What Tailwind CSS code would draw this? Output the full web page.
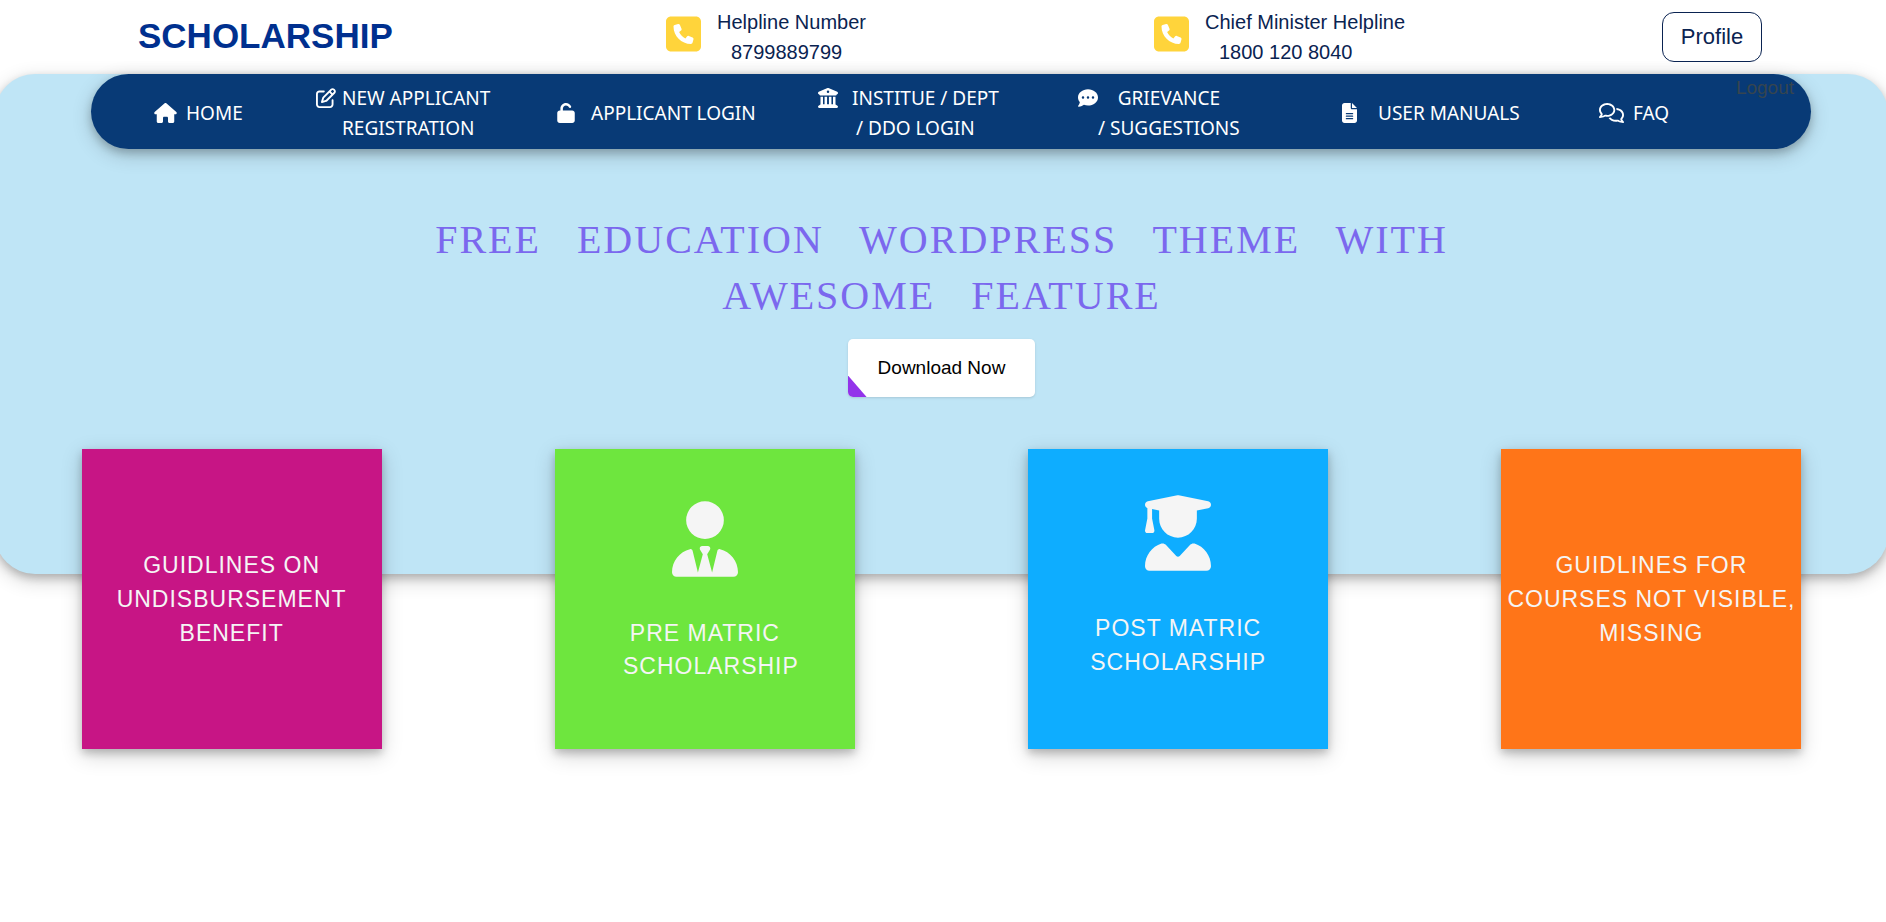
<!DOCTYPE html>
<html lang="en">
<head>
<meta charset="utf-8">
<meta name="viewport" content="width=device-width, initial-scale=1">
<title>Scholarship</title>
<script src="https://cdn.jsdelivr.net/npm/@tailwindcss/browser@4"></script>
</head>
<body class="min-h-screen overflow-x-hidden bg-white font-['Liberation_Sans',Arial,sans-serif]">

<header class="grid h-[74px] grid-cols-[528fr_488fr_508fr_100fr] pr-[124px] pl-[138px] text-[#0a2351]">
  <a href="#" class="pt-4 text-[35px] leading-10 font-bold text-[#00308f]">SCHOLARSHIP</a>
  <div class="flex gap-4 pt-[7px] text-xl leading-[30px]">
    <svg class="mt-[7px] h-10 w-[35px] shrink-0 fill-[#ffd43b]" viewBox="0 0 448 512" aria-hidden="true"><path d="M64 32C28.7 32 0 60.7 0 96V416c0 35.3 28.7 64 64 64H384c35.3 0 64-28.7 64-64V96c0-35.3-28.7-64-64-64H64zm90.7 96.7c9.7-2.6 19.9 2.3 23.7 11.6l20 48c3.4 8.2 1 17.6-5.8 23.2L168 231.7c16.6 35.2 45.1 63.7 80.3 80.3l20.2-24.7c5.6-6.8 15-9.2 23.2-5.8l48 20c9.3 3.9 14.2 14 11.6 23.7l-12 44C336.9 378 329 384 320 384C196.3 384 96 283.7 96 160c0-9 6-16.9 14.7-19.3l44-12z"/></svg>
    <p>Helpline Number<br><span class="pl-[14px]">8799889799</span></p>
  </div>
  <div class="flex gap-4 pt-[7px] text-xl leading-[30px]">
    <svg class="mt-[7px] h-10 w-[35px] shrink-0 fill-[#ffd43b]" viewBox="0 0 448 512" aria-hidden="true"><path d="M64 32C28.7 32 0 60.7 0 96V416c0 35.3 28.7 64 64 64H384c35.3 0 64-28.7 64-64V96c0-35.3-28.7-64-64-64H64zm90.7 96.7c9.7-2.6 19.9 2.3 23.7 11.6l20 48c3.4 8.2 1 17.6-5.8 23.2L168 231.7c16.6 35.2 45.1 63.7 80.3 80.3l20.2-24.7c5.6-6.8 15-9.2 23.2-5.8l48 20c9.3 3.9 14.2 14 11.6 23.7l-12 44C336.9 378 329 384 320 384C196.3 384 96 283.7 96 160c0-9 6-16.9 14.7-19.3l44-12z"/></svg>
    <p>Chief Minister Helpline<br><span class="pl-[14px]">1800 120 8040</span></p>
  </div>
  <div class="relative z-10 pt-3">
    <button type="button" class="h-[50px] w-full rounded-xl border border-[#0a2351] text-[22px] leading-7">Profile</button>
    <a href="#" class="absolute top-[76px] -right-8 text-[19px] leading-6 text-[#36454f]">Logout</a>
  </div>
</header>

<main class="-mr-[2px] -ml-[5px]">
  <section class="h-[500px] rounded-[40px] bg-[#bfe5f6] shadow-[0_4px_8px_0_rgba(0,0,0,0.2),0_6px_20px_0_rgba(0,0,0,0.19)]">
    <nav class="mr-[77px] ml-[96px] grid h-[75px] grid-cols-[162fr_241fr_261fr_260fr_264fr_257fr_149fr] items-center rounded-full bg-[#083a76] px-[63px] pt-[2px] font-['Noto_Sans','Open_Sans',sans-serif] text-[19px] leading-[30px] whitespace-nowrap text-white shadow-[0_4px_8px_0_rgba(0,0,0,0.2),0_6px_20px_0_rgba(0,0,0,0.19)]">
      <a href="#" class="flex gap-[9px]">
        <svg class="mt-[5px] h-5 w-[23px] shrink-0 fill-current" viewBox="0 0 576 512" aria-hidden="true"><path d="M575.8 255.5c0 18-15 32.1-32 32.1h-32l.7 160.2c0 2.7-.2 5.4-.5 8.1V472c0 22.1-17.9 40-40 40H456c-1.1 0-2.2 0-3.3-.1c-1.4 .1-2.8 .1-4.2 .1H416 392c-22.1 0-40-17.9-40-40V448 384c0-17.7-14.3-32-32-32H256c-17.7 0-32 14.3-32 32v64 24c0 22.1-17.9 40-40 40H160 128.1c-1.5 0-3-.1-4.5-.2c-1.2 .1-2.4 .2-3.6 .2H104c-22.1 0-40-17.9-40-40V360c0-.9 0-1.9 .1-2.8V287.6H32c-18 0-32-14-32-32.1c0-9 3-17 10-24L266.4 8c7-7 15-8 22-8s15 2 21 7L564.8 231.5c8 7 12 15 11 24z"/></svg>
        <span>HOME</span>
      </a>
      <a href="#" class="flex gap-[6px]">
        <svg class="mt-[5px] h-5 w-5 shrink-0 fill-current" viewBox="0 0 512 512" aria-hidden="true"><path d="M441 58.9L453.1 71c9.4 9.4 9.4 24.6 0 33.9L424 134.1 377.9 88 407 58.9c9.4-9.4 24.6-9.4 33.9 0zM209.8 256.2L344 121.9 390.1 168 255.8 302.2c-2.9 2.9-6.5 5-10.4 6.1l-58.5 16.7 16.7-58.5c1.1-3.9 3.2-7.5 6.1-10.4zM373.1 25L175.8 222.2c-8.7 8.7-15 19.4-18.3 31.1l-28.6 100c-2.4 8.4-.1 17.4 6.1 23.6s15.2 8.5 23.6 6.1l100-28.6c11.8-3.4 22.5-9.7 31.1-18.3L487 138.9c28.1-28.1 28.1-73.7 0-101.8L474.9 25C446.8-3.1 401.2-3.1 373.1 25zM88 64C39.4 64 0 103.4 0 152V424c0 48.6 39.4 88 88 88H360c48.6 0 88-39.4 88-88V312c0-13.3-10.7-24-24-24s-24 10.7-24 24V424c0 22.1-17.9 40-40 40H88c-22.1 0-40-17.9-40-40V152c0-22.1 17.9-40 40-40H200c13.3 0 24-10.7 24-24s-10.7-24-24-24H88z"/></svg>
        <span>NEW APPLICANT<br>REGISTRATION</span>
      </a>
      <a href="#" class="flex gap-4">
        <svg class="mt-[5px] h-5 w-[18px] shrink-0 fill-current" viewBox="0 0 448 512" aria-hidden="true"><path d="M144 144c0-44.2 35.8-80 80-80c31.9 0 59.4 18.6 72.3 45.7c7.6 16 26.7 22.8 42.6 15.2s22.8-26.7 15.2-42.6C331 33.7 281.5 0 224 0C144.5 0 80 64.5 80 144v48H64c-35.3 0-64 28.7-64 64V448c0 35.3 28.7 64 64 64H384c35.3 0 64-28.7 64-64V256c0-35.3-28.7-64-64-64H144V144z"/></svg>
        <span>APPLICANT LOGIN</span>
      </a>
      <a href="#" class="flex gap-[14px]">
        <svg class="mt-[5px] h-5 w-5 shrink-0 fill-current" viewBox="0 0 512 512" aria-hidden="true"><path d="M243.4 2.6l-224 96c-14 6-21.8 21-18.7 35.8S16.8 160 32 160v8c0 13.3 10.7 24 24 24H456c13.3 0 24-10.7 24-24v-8c15.2 0 28.3-10.7 31.3-25.6s-4.8-29.9-18.7-35.8l-224-96c-8-3.4-17.2-3.4-25.2 0zM128 224H64V420.3c-.6 .3-1.2 .7-1.8 1.1l-48 32c-11.7 7.8-17 22.4-12.9 35.9S17.9 512 32 512H480c14.1 0 26.5-9.2 30.6-22.7s-1.1-28.1-12.9-35.9l-48-32c-.6-.4-1.2-.7-1.8-1.1V224H384V416H344V224H280V416H232V224H168V416H128V224zM256 64a32 32 0 1 1 0 64 32 32 0 1 1 0-64z"/></svg>
        <span>INSTITUE / DEPT<br><span class="pl-1">/ DDO LOGIN</span></span>
      </a>
      <a href="#" class="flex">
        <svg class="mt-[5px] h-5 w-5 shrink-0 fill-current" viewBox="0 0 512 512" aria-hidden="true"><path d="M256 448c141.4 0 256-93.1 256-208S397.4 32 256 32S0 125.1 0 240c0 45.1 17.7 86.8 47.7 120.9c-1.9 24.5-11.4 46.3-21.4 62.9c-5.5 9.2-11.1 16.6-15.2 21.6c-2.1 2.5-3.7 4.4-4.9 5.7c-.6 .6-1 1.1-1.3 1.4l-.3 .3c-4.6 4.6-5.9 11.4-3.4 17.4c2.5 6 8.3 9.9 14.8 9.9c28.7 0 57.6-8.9 81.6-19.3c22.9-10 42.4-21.9 54.3-30.6c31.8 11.5 67 17.9 104.1 17.9zM128 208a32 32 0 1 1 0 64 32 32 0 1 1 0-64zm128 0a32 32 0 1 1 0 64 32 32 0 1 1 0-64zm96 32a32 32 0 1 1 64 0 32 32 0 1 1-64 0z"/></svg>
        <span class="text-center">GRIEVANCE<br>/ SUGGESTIONS</span>
      </a>
      <a href="#" class="flex gap-[21px]">
        <svg class="mt-[5px] h-5 w-[15px] shrink-0 fill-current" viewBox="0 0 384 512" aria-hidden="true"><path d="M64 0C28.7 0 0 28.7 0 64V448c0 35.3 28.7 64 64 64H320c35.3 0 64-28.7 64-64V160H256c-17.7 0-32-14.3-32-32V0H64zM256 0V128H384L256 0zM112 256H272c8.8 0 16 7.2 16 16s-7.2 16-16 16H112c-8.8 0-16-7.2-16-16s7.2-16 16-16zm0 64H272c8.8 0 16 7.2 16 16s-7.2 16-16 16H112c-8.8 0-16-7.2-16-16s7.2-16 16-16zm0 64H272c8.8 0 16 7.2 16 16s-7.2 16-16 16H112c-8.8 0-16-7.2-16-16s7.2-16 16-16z"/></svg>
        <span>USER MANUALS</span>
      </a>
      <a href="#" class="flex gap-[9px]">
        <svg class="mt-[5px] h-5 w-[25px] shrink-0 fill-current" viewBox="0 0 640 512" aria-hidden="true"><path d="M88.2 309.1c9.8-18.3 6.8-40.8-7.5-55.8C59.4 230.9 48 204 48 176c0-63.5 63.8-128 160-128s160 64.5 160 128s-63.8 128-160 128c-13.1 0-25.8-1.3-37.8-3.6c-10.4-2-21.2-.6-30.7 4.2c-4.1 2.1-8.3 4.1-12.6 6c-16 7.2-32.9 13.5-49.9 18c2.8-4.6 5.4-9.1 7.9-13.6c1.1-1.9 2.2-3.9 3.2-5.9zM0 176c0 41.8 17.2 80.1 45.9 110.3c-.9 1.7-1.9 3.5-2.8 5.1c-10.3 18.4-22.3 36.5-36.6 52.1c-6.6 7-8.3 17.2-4.6 25.9C5.8 378.3 14.4 384 24 384c43 0 86.5-13.3 122.7-29.7c4.8-2.2 9.6-4.5 14.2-6.8c15.1 3 30.9 4.5 47.1 4.5c114.9 0 208-78.8 208-176S322.9 0 208 0S0 78.8 0 176zM432 480c16.2 0 31.9-1.6 47.1-4.5c4.6 2.3 9.4 4.6 14.2 6.8C529.5 498.7 573 512 616 512c9.6 0 18.2-5.7 22-14.5c3.8-8.8 2-19-4.6-25.9c-14.2-15.6-26.2-33.7-36.6-52.1c-.9-1.7-1.9-3.4-2.8-5.1C622.8 384.1 640 345.8 640 304c0-94.4-87.9-171.5-198.2-175.8c4.1 15.2 6.2 31.2 6.2 47.8l0 .6c87.2 6.7 144 67.5 144 127.4c0 28-11.4 54.9-32.7 77.2c-14.3 15-17.3 37.6-7.5 55.8c1.1 2 2.2 4 3.2 5.9c2.5 4.5 5.2 9 7.9 13.6c-17-4.5-33.9-10.7-49.9-18c-4.3-1.9-8.5-3.9-12.6-6c-9.5-4.8-20.3-6.2-30.7-4.2c-12.1 2.4-24.7 3.6-37.8 3.6c-61.7 0-110-26.5-136.8-62.3c-16 5.4-32.8 9.4-50 11.8C279 439.8 350 480 432 480z"/></svg>
        <span>FAQ</span>
      </a>
    </nav>

    <div class="flex flex-col items-center pt-[63px]">
      <h1 class="max-w-[1100px] text-center font-['Liberation_Serif',serif] text-[40px] leading-[56px] tracking-[2px] text-[#7b68ee] [word-spacing:24px]">FREE EDUCATION WORDPRESS THEME WITH AWESOME FEATURE</h1>
      <button type="button" class="relative mt-[15px] h-[58px] overflow-hidden rounded-[5px] bg-white px-[30px] text-[19px] leading-6 text-black shadow-sm">
        <span class="absolute bottom-0 left-0 h-[22px] w-[19px] bg-[#9333ea] [clip-path:polygon(0_0,100%_100%,0_100%)]"></span>
        Download Now
      </button>
    </div>
  </section>

  <section class="-mt-[125px] flex justify-around text-center text-[23px] leading-[34px] tracking-[1px] text-[#f5f5f5]">
    <a href="#" class="flex size-[300px] flex-col items-center justify-center bg-[#c71585] shadow-[0_4px_8px_0_rgba(0,0,0,0.2),0_6px_20px_0_rgba(0,0,0,0.19)]">
      <span>GUIDLINES ON<br>UNDISBURSEMENT<br>BENEFIT</span>
    </a>
    <a href="#" class="flex size-[300px] flex-col items-center bg-[#6ee63e] pt-[52px] leading-[33px] shadow-[0_4px_8px_0_rgba(0,0,0,0.2),0_6px_20px_0_rgba(0,0,0,0.19)]">
      <svg class="mb-10 h-[76px] w-[66px] fill-current" viewBox="0 0 448 512" aria-hidden="true"><path d="M96 128a128 128 0 1 0 256 0A128 128 0 1 0 96 128zm94.5 200.2l18.6 31L175.8 483.1l-36-146.9c-2-8.1-9.8-13.4-17.9-11.3C51.9 342.4 0 405.8 0 481.3c0 17 13.8 30.7 30.7 30.7H162.5c0 0 0 0 .1 0H168 280h5.5c0 0 0 0 .1 0H417.3c17 0 30.7-13.8 30.7-30.7c0-75.5-51.9-138.9-121.9-156.4c-8.1-2-15.9 3.3-17.9 11.3l-36 146.9L238.9 359.2l18.6-31c6.4-10.7-1.3-24.2-13.7-24.2H224 204.3c-12.4 0-20.1 13.6-13.7 24.2z"/></svg>
      <span>PRE MATRIC<br><span class="pl-3">SCHOLARSHIP</span></span>
    </a>
    <a href="#" class="flex size-[300px] flex-col items-center bg-[#0eadff] pt-[46px] shadow-[0_4px_8px_0_rgba(0,0,0,0.2),0_6px_20px_0_rgba(0,0,0,0.19)]">
      <svg class="mb-10 h-[76px] w-[66px] fill-current" viewBox="0 0 448 512" aria-hidden="true"><path d="M219.3 .5c3.1-.6 6.3-.6 9.4 0l200 40C439.9 42.7 448 52.6 448 64s-8.1 21.3-19.3 23.5L352 102.9V160c0 70.7-57.3 128-128 128s-128-57.3-128-128V102.9L48 93.3v65.1l15.7 78.4c.9 4.7-.3 9.6-3.3 13.3s-7.6 5.9-12.4 5.9H16c-4.8 0-9.3-2.1-12.4-5.9s-4.3-8.6-3.3-13.3L16 158.4V86.6C6.5 83.3 0 74.3 0 64C0 52.6 8.1 42.7 19.3 40.5l200-40zM111.9 327.7c10.5-3.4 21.8 .4 29.4 8.5l71 75.5c6.3 6.7 17 6.7 23.3 0l71-75.5c7.6-8.1 18.9-11.9 29.4-8.5C401 348.6 448 409.4 448 481.3c0 17-13.8 30.7-30.7 30.7H30.7C13.8 512 0 498.2 0 481.3c0-71.9 47-132.7 111.9-153.6z"/></svg>
      <span>POST MATRIC<br>SCHOLARSHIP</span>
    </a>
    <a href="#" class="flex size-[300px] flex-col items-center justify-center bg-[#ff7518] shadow-[0_4px_8px_0_rgba(0,0,0,0.2),0_6px_20px_0_rgba(0,0,0,0.19)]">
      <span>GUIDLINES FOR<br>COURSES NOT VISIBLE,<br>MISSING</span>
    </a>
  </section>
</main>
</body>
</html>
